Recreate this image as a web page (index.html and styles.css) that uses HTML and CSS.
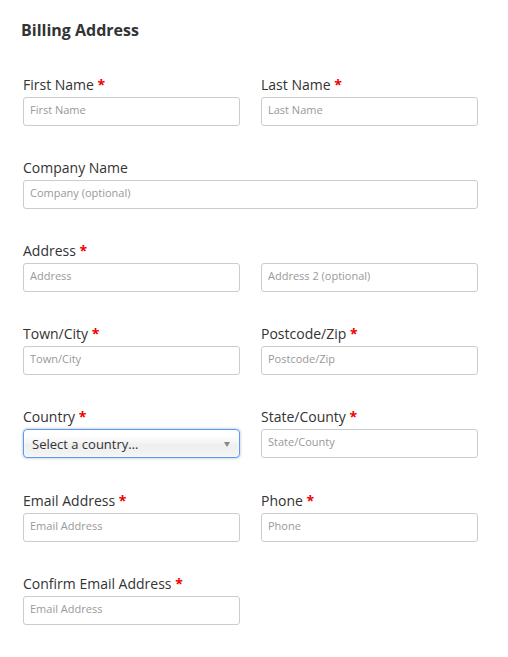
FILE: index.html
```html
<!DOCTYPE html>
<html lang="en">
<head>
<meta charset="utf-8">
<title>Billing Address</title>
<link rel="stylesheet" href="styles.css">
</head>
<body>
<form class="billing">
  <h3 class="billing-title">Billing Address</h3>

  <div class="row">
    <div class="field">
      <label class="field-label">First Name <abbr class="req">*</abbr></label>
      <input class="text-input" type="text" placeholder="First Name">
    </div>
    <div class="field">
      <label class="field-label">Last Name <abbr class="req">*</abbr></label>
      <input class="text-input" type="text" placeholder="Last Name">
    </div>
  </div>

  <div class="row">
    <div class="field field-wide">
      <label class="field-label">Company Name</label>
      <input class="text-input" type="text" placeholder="Company (optional)">
    </div>
  </div>

  <div class="row">
    <div class="field">
      <label class="field-label">Address <abbr class="req">*</abbr></label>
      <input class="text-input" type="text" placeholder="Address">
    </div>
    <div class="field field-nolabel">
      <input class="text-input" type="text" placeholder="Address 2 (optional)">
    </div>
  </div>

  <div class="row">
    <div class="field">
      <label class="field-label">Town/City <abbr class="req">*</abbr></label>
      <input class="text-input" type="text" placeholder="Town/City">
    </div>
    <div class="field">
      <label class="field-label">Postcode/Zip <abbr class="req">*</abbr></label>
      <input class="text-input" type="text" placeholder="Postcode/Zip">
    </div>
  </div>

  <div class="row row-select">
    <div class="field">
      <label class="field-label">Country <abbr class="req">*</abbr></label>
      <div class="select-box">
        <span class="select-text">Select a country…</span>
        <span class="select-arrow"></span>
      </div>
    </div>
    <div class="field">
      <label class="field-label">State/County <abbr class="req">*</abbr></label>
      <input class="text-input" type="text" placeholder="State/County">
    </div>
  </div>

  <div class="row">
    <div class="field">
      <label class="field-label">Email Address <abbr class="req">*</abbr></label>
      <input class="text-input" type="text" placeholder="Email Address">
    </div>
    <div class="field">
      <label class="field-label">Phone <abbr class="req">*</abbr></label>
      <input class="text-input" type="text" placeholder="Phone">
    </div>
  </div>

  <div class="row">
    <div class="field">
      <label class="field-label">Confirm Email Address <abbr class="req">*</abbr></label>
      <input class="text-input" type="text" placeholder="Email Address">
    </div>
  </div>
</form>
</body>
</html>
```

FILE: styles.css
```css
* {
  box-sizing: border-box;
}

html, body {
  margin: 0;
  padding: 0;
  background: #fff;
}

body {
  font-family: "Open Sans", "DejaVu Sans", sans-serif;
  color: #333;
}

.billing {
  padding: 19px 0 0 23px;
  display: flex;
  flex-direction: column;
}

.billing-title {
  margin: 0 0 34px -2px;
  font-size: 16px;
  line-height: 22px;
  font-weight: 700;
  color: #333;
}

.row {
  display: grid;
  grid-template-columns: 217px 217px;
  column-gap: 21px;
  margin-bottom: 32px;
  align-items: start;
}

.row-select {
  margin-bottom: 33px;
}

.field {
  display: flex;
  flex-direction: column;
}

.field-wide {
  grid-column: 1 / span 2;
}

.field-nolabel {
  padding-top: 22px;
}

.field-label {
  font-size: 14px;
  line-height: 19px;
  margin-bottom: 3px;
  color: #333;
}

.req {
  color: #e00;
  font-weight: 700;
  text-decoration: none;
  border: 0;
}

.text-input {
  display: block;
  width: 100%;
  height: 29px;
  margin: 0;
  padding: 0 6px 5px;
  border: 1px solid #ccc;
  border-radius: 3px;
  background: #fff;
  font-family: "Open Sans", "DejaVu Sans", sans-serif;
  font-size: 11px;
  color: #333;
  outline: none;
}

.text-input::placeholder {
  color: #999;
  opacity: 1;
}

.select-box {
  height: 29px;
  display: flex;
  align-items: center;
  padding: 2px 8px 0;
  border: 1px solid #5897fb;
  border-radius: 4px;
  background: linear-gradient(to bottom, #fff 20%, #f3f3f3 50%, #eee 52%, #f4f4f4 100%);
  box-shadow: 0 0 3px rgba(0, 0, 0, 0.3), inset 0 0 3px #fff;
  font-size: 13px;
  line-height: 17px;
  color: #333;
}

.select-text {
  flex: 1;
}

.select-arrow {
  width: 0;
  height: 0;
  margin-right: 1px;
  border-left: 3.5px solid transparent;
  border-right: 3.5px solid transparent;
  border-top: 5px solid #888;
}
```
